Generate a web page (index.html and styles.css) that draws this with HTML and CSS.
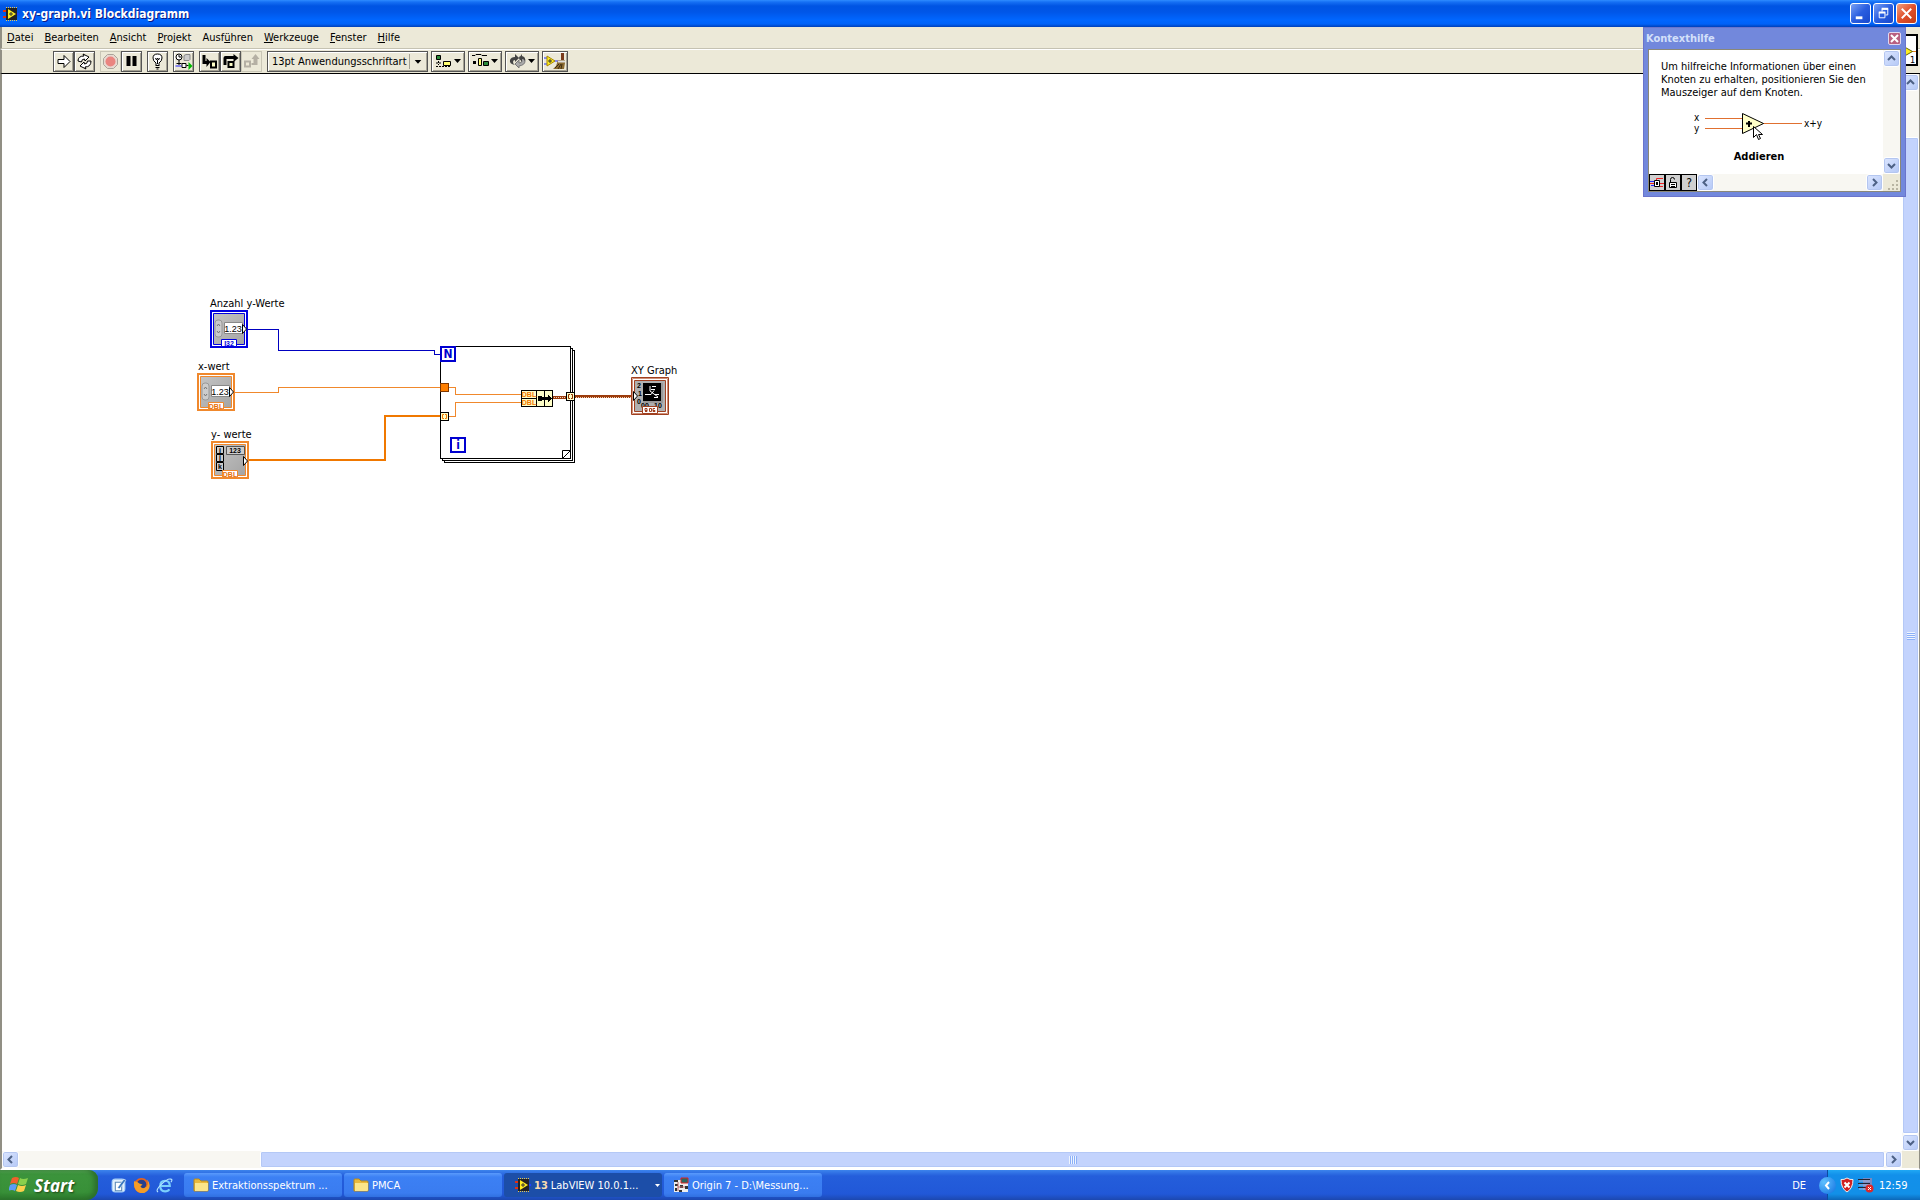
FILE: index.html
```html
<!DOCTYPE html>
<html lang="de">
<head>
    <meta charset="UTF-8">
    <meta name="viewport" content="width=device-width, initial-scale=1.0">
    <title>xy-graph.vi Blockdiagramm</title>
    <link rel="stylesheet" href="styles.css">
</head>
<body>
    <!-- shared symbols -->
    <svg class="defs" width="0" height="0" aria-hidden="true">
        <symbol id="vi" viewBox="0 0 16 16">
            <path d="M0 5h3M0 11h3" stroke="#e03010" stroke-width="2"/>
            <path d="M13 8h3" stroke="#2040ff" stroke-width="2"/>
            <path d="M3 2h11v12H3z" fill="#222"/>
            <path d="M3 1.500h11M3 14.500h11" stroke="#e8c850" stroke-dasharray="1 1"/>
            <path d="M5 3l8 5-8 5z" fill="#ffee20"/>
            <path d="M6 8h4M8 6v4" stroke="#333"/>
        </symbol>
        <symbol id="folder" viewBox="0 0 16 16">
            <path d="M1 3q0-1 1-1h4l2 2h6q1 0 1 1v9H1z" fill="#e9b93c" stroke="#b98a1c"/>
            <path d="M2 6h13v7q0 1-1 1H2z" fill="#fbe58a"/>
        </symbol>
        <symbol id="up" viewBox="0 0 9 9"><path d="M1 6l3.500-3.500L8 6" fill="none" stroke="#4d6185" stroke-width="2"/></symbol>
        <symbol id="down" viewBox="0 0 9 9"><path d="M1 3l3.500 3.500L8 3" fill="none" stroke="#4d6185" stroke-width="2"/></symbol>
        <symbol id="left" viewBox="0 0 9 9"><path d="M6 1L2.500 4.500L6 8" fill="none" stroke="#4d6185" stroke-width="2"/></symbol>
        <symbol id="right" viewBox="0 0 9 9"><path d="M3 1l3.500 3.500L3 8" fill="none" stroke="#4d6185" stroke-width="2"/></symbol>
    </svg>

    <header class="titlebar">
        <svg class="icon16" aria-hidden="true"><use href="#vi"/></svg>
        <h1>xy-graph.vi Blockdiagramm</h1>
        <div class="window-buttons">
            <button type="button" aria-label="Minimieren"><svg viewBox="0 0 20 20"><path d="M5 14.500h7" stroke="#fff" stroke-width="3"/></svg></button>
            <button type="button" aria-label="Wiederherstellen"><svg viewBox="0 0 20 20" fill="none" stroke="#fff"><path d="M8.500 8V5.500h6v6H12"/><path d="M8 5h7M5 9h7" stroke-width="2"/><path d="M5.500 9v5.500h6V9"/></svg></button>
            <button type="button" class="close" aria-label="Schließen"><svg viewBox="0 0 20 20"><path d="M5 5l10 10M15 5L5 15" stroke="#fff" stroke-width="2"/></svg></button>
        </div>
    </header>

    <nav class="menubar">
        <a href="#"><u>D</u>atei</a>
        <a href="#"><u>B</u>earbeiten</a>
        <a href="#"><u>A</u>nsicht</a>
        <a href="#"><u>P</u>rojekt</a>
        <a href="#">Ausf<u>ü</u>hren</a>
        <a href="#"><u>W</u>erkzeuge</a>
        <a href="#"><u>F</u>enster</a>
        <a href="#"><u>H</u>ilfe</a>
    </nav>

    <div class="toolbar">
        <div class="group">
            <button type="button" aria-label="Ausführen"><svg viewBox="0 0 18 17"><path d="M3.500 6.500h6v-4l6 6-6 6v-4h-6z" fill="#fff" stroke="#000"/></svg></button>
            <button type="button" aria-label="Wiederholt ausführen"><svg viewBox="0 0 18 17" fill="#fff" stroke="#000"><path d="M2.500 8q0-5 6-5l-1-2 6 3-4 4-.5-2q-3 0-3 3z"/><path d="M15.500 8q0 6-6 6l1 2-6-3 4-4 .5 2q3 0 3-3z"/></svg></button>
        </div>
        <div class="group">
            <button type="button" class="flat" aria-label="Abbrechen"><svg viewBox="0 0 18 17"><path d="M6 1.500h6l4 4v6l-4 4H6l-4-4v-6z" fill="#e8d8d0" stroke="#aaa49a"/><circle cx="9" cy="8.500" r="5" fill="#ea8580"/></svg></button>
            <button type="button" aria-label="Pause"><svg viewBox="0 0 18 17"><path d="M4 3h4v10H4zM10 3h4v10h-4z"/></svg></button>
        </div>
        <div class="group">
            <button type="button" aria-label="Highlight-Funktion"><svg viewBox="0 0 18 17" fill="none" stroke="#000"><path d="M7.500 12v-2q-3-2-3-5 0-4 4.500-4t4.500 4q0 3-3 5v2" fill="#fff"/><path d="M7 5l1 2 1-2 1 2 1-2M9 7v4M7 12.500h4M7 14.500h4M8 16h2"/></svg></button>
        </div>
        <div class="group">
            <button type="button" aria-label="Werte beibehalten"><svg viewBox="0 0 18 17" fill="none" stroke="#000"><circle cx="4.500" cy="4" r="3" fill="#fff"/><path d="M4.500 7v5M4.500 2v2h2M2 10.500h5"/><path d="M9.500 2.500l2-1h4v5l-1 1h-5z" fill="#ccc" stroke="#888"/><path d="M1 13h6" stroke="#22f" stroke-width="1"/><path d="M7.500 10.500h4v4h-4z" fill="#fff"/><path d="M12 12.500h2"/><path d="M14 9l4 4-4 4z" fill="#0b0" stroke="none"/></svg></button>
        </div>
        <div class="group">
            <button type="button" aria-label="Hineinspringen"><svg viewBox="0 0 18 17"><path d="M2 2v9h4v3l4-5-4-4v3H5V2z"/><path d="M10.500 8.500h5v6h-5z" fill="#ffffc8" stroke="#000" stroke-width="2"/></svg></button>
            <button type="button" aria-label="Überspringen"><svg viewBox="0 0 18 17"><path d="M2 12V5q0-2 2-2h8V1l5 4-5 4V6H5v6z"/><path d="M7 9h5v5H7z" fill="#ffffc8" stroke="#000" stroke-width="2"/></svg></button>
            <button type="button" class="flat" aria-label="Herausspringen"><svg viewBox="0 0 18 17" fill="#b5b0a4"><path d="M2.500 8.500h5v5h-5z" fill="#eee9d6" stroke="#b5b0a4" stroke-width="2"/><path d="M9 12h6V6h2l-4-5-4 5h2v4H9z"/></svg></button>
        </div>
        <div class="font-picker">
            <select aria-label="Schriftart"><option>13pt Anwendungsschriftart</option></select>
            <svg viewBox="0 0 17 15" aria-hidden="true"><path d="M5 6h7l-3.500 4z"/></svg>
        </div>
        <button type="button" class="wide" aria-label="Objekte ausrichten"><svg viewBox="0 0 30 17"><path d="M3.500 2.500h4v4h-4z" fill="#2a8a3a" stroke="#000"/><path d="M10.500 8.500h7v4h-7z" fill="#ffff70" stroke="#000"/><path d="M5.500 8v4M3 10h5M3 13.500h15" stroke="#000" stroke-dasharray="2 1"/><path d="M21 6h7l-3.500 4z"/></svg></button>
        <button type="button" class="wide" aria-label="Objekte verteilen"><svg viewBox="0 0 30 17"><path d="M2 2.500h3l1-1h5l1 1h5" fill="none" stroke="#000"/><path d="M3 8h3v3H3z"/><path d="M8.500 5.500h3v7h-3z" fill="#ffff70" stroke="#000"/><path d="M13.500 8.500h5v4h-5z" fill="#2a8a3a" stroke="#000"/><path d="M21 6h7l-3.500 4z"/></svg></button>
        <button type="button" class="wide" aria-label="Neu ordnen"><svg viewBox="0 0 30 17"><path d="M8 12q-6-1-5-5 1-3 5-3V1l4 4-4 4V7q-2 0-2 2t2 3z" fill="#444"/><path d="M12 4q6 0 6 4t-6 5v2L8 11l4-4v3q3 0 3-2t-3-2z" fill="#aaa" stroke="#777"/><path d="M12 5l3-4v2q4 1 3 5-1-2-3-2v3z" fill="#444"/><path d="M21 6h7l-3.500 4z"/></svg></button>
        <button type="button" class="clean" aria-label="Diagramm aufräumen"><svg viewBox="0 0 22 17"><path d="M0 5h4M0 11h4M10 8h4" stroke="#23f"/><path d="M3 3l8 5-8 5z" fill="#ffee20" stroke="#a80"/><path d="M4 8h4M6 6v4" stroke="#333"/><path d="M17 0h3v7h-3z" fill="#7a3b1c"/><path d="M14 7h7v3l-1 6H9l3-3z" fill="#8a6a30"/><path d="M14 8.500h7" stroke="#ddd" stroke-width="2"/><path d="M11 15l4-4M14 16l3-5M17 16l1-5" stroke="#3c2c10"/></svg></button>
        <svg class="vi-icon" viewBox="0 0 32 32" aria-label="VI-Symbol">
            <path d="M1 1h30v30H1z" fill="#fff" stroke="#000" stroke-width="2"/>
            <path d="M2 17.500h28" stroke="#e08020"/>
            <path d="M18.500 13v9l8-4.500z" fill="#ffee20" stroke="#660"/>
            <text x="24" y="29" font-size="9">1</text>
        </svg>
    </div>

    <main class="workspace">
        <div class="canvas">
            <svg class="diagram" width="700" height="420" viewBox="2 74 700 420" role="img" aria-label="Blockdiagramm">
                <defs>
                    <linearGradient id="steel" x1="0" y1="0" x2="1" y2="1">
                        <stop offset="0" stop-color="#c4c4c4"/><stop offset="1" stop-color="#a4a4a4"/>
                    </linearGradient>
                    <pattern id="weave" width="2" height="3" patternUnits="userSpaceOnUse">
                        <path d="M0 0h2v3H0z" fill="#9c3c0c"/><path d="M0 1h1v1H0z" fill="#f0d0b8"/>
                    </pattern>
                </defs>

                <!-- wires -->
                <g fill="none" shape-rendering="crispEdges">
                    <path d="M248 329.500H278.500V350.500H434.500V354.500H441" stroke="#0000c0"/>
                    <path d="M235 392.500H278.500V387.500H441" stroke="#f0882c"/>
                    <path d="M249 460H385V416H441" stroke="#f07800" stroke-width="2"/>
                </g>

                <!-- for loop -->
                <g fill="#fff" stroke="#000" shape-rendering="crispEdges">
                    <path d="M444.500 350.500h130v112h-130z"/>
                    <path d="M442.500 348.500h130v112h-130z"/>
                    <path d="M440.500 346.500h130v112h-130z"/>
                </g>
                <path d="M562.500 458.500v-8h8z" fill="#fff" stroke="#000"/>
                <g fill="none" stroke="#f0882c" shape-rendering="crispEdges">
                    <path d="M449 387.500h6.500v7H522"/>
                    <path d="M449 416.500h6.500v-14H522"/>
                </g>
                <path d="M441 347h14v14h-14z" fill="#fff" stroke="#0000d0" stroke-width="2"/>
                <text class="loop" x="448" y="358">N</text>
                <path d="M451 438h14v14h-14z" fill="#fff" stroke="#0000d0" stroke-width="2"/>
                <text class="loop" x="458" y="449">i</text>
                <g stroke="#000" shape-rendering="crispEdges">
                    <path d="M440.500 383.500h8v8h-8z" fill="#ff7f00" stroke="#803800"/>
                    <path d="M440.500 412.500h8v8h-8z" fill="#ffffc8"/>
                    <path d="M566.500 392.500h8v8h-8z" fill="#ffffc8"/>
                </g>
                <path d="M444 414.500h-1.500v4h1.500M445 414.500h1.500v4h-1.500" fill="none" stroke="#f07800"/>
                <path d="M570 394.500h-1.500v4h1.500M571 394.500h1.500v4h-1.500" fill="none" stroke="#903000"/>

                <!-- bundle -->
                <g shape-rendering="crispEdges">
                    <path d="M521.500 390.500h31v16h-31z" fill="#ffffc8" stroke="#000"/>
                    <path d="M521 398.500h16M536.500 391v16M544.500 391v16" stroke="#000"/>
                    <path d="M538 396h4v1h6v-2l4 3.500-4 3.500v-2h-6v1h-4z"/>
                </g>
                <text class="type" x="529" y="397" fill="#f07800">DBL</text>
                <text class="type" x="529" y="405" fill="#f07800">DBL</text>
                <path d="M553 396h13v3h-13zM575 395h57v3h-57z" fill="url(#weave)"/>

                <!-- terminals -->
                <g id="i32">
                    <path d="M211 311h36v36h-36z" fill="#fff" stroke="#0000e0" stroke-width="2"/>
                    <path d="M213.500 313.500h31v31h-31z" fill="url(#steel)" stroke="#0000e0"/>
                    <rect x="215" y="320" width="7" height="17" rx="3" fill="#ccc" stroke="#999"/>
                    <path d="M217 326l1.500-2 1.500 2M217 331l1.500 2 1.500-2" fill="none" stroke="#777"/>
                    <path d="M224.500 322.500h18v11h-18z" fill="#fff" stroke="#888"/>
                    <text class="num" x="233" y="332">1.23</text>
                    <path d="M242.500 324.500v9l4-4.500z" fill="#fff" stroke="#000"/>
                    <path d="M221.500 339.500h15v7h-15z" fill="#fff" stroke="#0000e0"/>
                    <text class="type" x="229" y="346" fill="#0000e0">I32</text>
                </g>
                <g id="dbl">
                    <path d="M198 374h36v36h-36z" fill="#fff" stroke="#f0882c" stroke-width="2"/>
                    <path d="M200.500 376.500h31v31h-31z" fill="url(#steel)" stroke="#f0882c"/>
                    <rect x="202" y="383" width="7" height="17" rx="3" fill="#ccc" stroke="#999"/>
                    <path d="M204 389l1.500-2 1.500 2M204 394l1.500 2 1.500-2" fill="none" stroke="#777"/>
                    <path d="M211.500 385.500h18v11h-18z" fill="#fff" stroke="#888"/>
                    <text class="num" x="220" y="395">1.23</text>
                    <path d="M229.500 387.500v9l4-4.500z" fill="#fff" stroke="#000"/>
                    <path d="M208.500 402.500h15v7h-15z" fill="#fff" stroke="#f0882c"/>
                    <text class="type" x="216" y="409" fill="#e87008">DBL</text>
                </g>
                <g id="array">
                    <path d="M212 442h36v36h-36z" fill="#fff" stroke="#f0882c" stroke-width="2"/>
                    <path d="M214.500 444.500h31v31h-31z" fill="url(#steel)" stroke="#f0882c"/>
                    <path d="M216.500 446.500h7v7h-7zM216.500 454.500h7v7h-7zM216.500 462.500h7v8h-7z" fill="#ccc" stroke="#000"/>
                    <text class="type" x="220" y="453">i</text>
                    <text class="type" x="220" y="460">j</text>
                    <text class="type" x="220" y="469">k</text>
                    <path d="M226.500 446.500h18v8h-18z" fill="#ccc" stroke="#555"/>
                    <text class="type" x="235" y="453">123</text>
                    <path d="M243.500 456.500v9l4-4.500z" fill="#fff" stroke="#000"/>
                    <path d="M222.500 470.500h15v7h-15z" fill="#fff" stroke="#f0882c"/>
                    <text class="type" x="230" y="477" fill="#e87008">DBL</text>
                </g>
                <g id="graph">
                    <path d="M631.500 377.500h37v37h-37z" fill="#fff" stroke="#a04020"/>
                    <path d="M632.500 378.500h35v35h-35z" fill="none" stroke="#d09078"/>
                    <path d="M634.500 380.500h31v31h-31z" fill="#b0b0b0" stroke="#a04020"/>
                    <path d="M643 383h18v18h-18z"/>
                    <path d="M645 394.500h6l3-4M650 386v5l4 3 4 3M652 386.500h4M651 389.500h4M655 394.500h4M654 397.500h4" fill="none" stroke="#fff"/>
                    <path d="M661 383h2v20h-20v-2h18z" fill="#999"/>
                    <text class="type" x="639" y="388">2</text>
                    <text class="type" x="640" y="396">1</text>
                    <text class="type" x="639" y="404">0</text>
                    <text class="type" x="645" y="408">00</text>
                    <text class="type" x="658" y="408">10</text>
                    <path d="M633.500 391.500v9l4-4.500z" fill="#fff" stroke="#000"/>
                    <path d="M642.500 406.500h15v7h-15z" fill="#fff" stroke="#a04020"/>
                    <path d="M645 411.500h2v-3h-2v2h2M649.500 408.500h2v3h-2zM655 408.500h-2v3h2v-1h-2" fill="none" stroke="#a04020"/>
                </g>
                <text class="label" x="210" y="307">Anzahl y-Werte</text>
                <text class="label" x="198" y="370">x-wert</text>
                <text class="label" x="211" y="438">y- werte</text>
                <text class="label" x="631" y="374">XY Graph</text>
            </svg>
        </div>
        <div class="scroll vertical page-v">
            <button type="button" aria-label="Nach oben"><svg><use href="#up"/></svg></button>
            <div class="thumb"><i></i></div>
            <button type="button" aria-label="Nach unten"><svg><use href="#down"/></svg></button>
        </div>
        <div class="scroll horizontal page-h">
            <button type="button" aria-label="Nach links"><svg><use href="#left"/></svg></button>
            <div class="thumb"><i></i></div>
            <button type="button" aria-label="Nach rechts"><svg><use href="#right"/></svg></button>
        </div>
    </main>

    <aside class="help">
        <div class="help-title">
            <h2>Kontexthilfe</h2>
            <button type="button" aria-label="Kontexthilfe schließen"><svg viewBox="0 0 11 11"><path d="M2 2l7 7M9 2L2 9" stroke="#fff" stroke-width="2"/></svg></button>
        </div>
        <div class="help-body">
            <div class="help-text">
                <p>Um hilfreiche Informationen über einen<br>Knoten zu erhalten, positionieren Sie den<br>Mauszeiger auf dem Knoten.</p>
                <svg width="196" height="34" viewBox="0 0 196 34" role="img" aria-label="Addieren">
                    <path d="M44 8.500h38M44 18.500h38M102 13.500h39" stroke="#e07030"/>
                    <path d="M81.500 3.500v20l21-10z" fill="#ffffc8" stroke="#000"/>
                    <path d="M85 13.500h6M88 11v6" stroke="#000" stroke-width="2"/>
                    <path d="M92.500 16.500v11l3-3 2 5 2-1-2-4h4z" fill="#fff" stroke="#000"/>
                    <text x="33" y="11">x</text>
                    <text x="33" y="22">y</text>
                    <text x="143" y="17">x+y</text>
                </svg>
                <strong>Addieren</strong>
            </div>
            <div class="scroll vertical">
                <button type="button" aria-label="Hilfe nach oben"><svg><use href="#up"/></svg></button>
                <button type="button" aria-label="Hilfe nach unten"><svg><use href="#down"/></svg></button>
            </div>
            <div class="help-footer">
                <button type="button" class="tool" aria-label="Optionale Anschlüsse anzeigen"><svg viewBox="0 0 14 14" fill="none"><path d="M0 5.500h4M1 9.500h4" stroke="#22f"/><path d="M0 7.500h14M6.500 5V2.500H13M9 10.500h4" stroke="#e22"/><path d="M4.500 4.500h5v6h-5z" fill="#fff" stroke="#000"/><path d="M6 6h2v3H6z" fill="#000"/></svg></button>
                <button type="button" class="tool" aria-label="Hilfe sperren"><svg viewBox="0 0 14 14" fill="none"><path d="M4.500 7V3.500q0-2 2-2t2 2" stroke="#000"/><path d="M3.500 6.500h7v5h-7z" fill="#fff" stroke="#000"/><path d="M5 8.500h4M5 10.500h4" stroke="#000"/></svg></button>
                <button type="button" class="tool" aria-label="Ausführliche Hilfe">?</button>
                <div class="scroll horizontal">
                    <button type="button" aria-label="Hilfe nach links"><svg><use href="#left"/></svg></button>
                    <button type="button" aria-label="Hilfe nach rechts"><svg><use href="#right"/></svg></button>
                </div>
                <svg class="grip" viewBox="0 0 17 17"><path d="M13 6h2v2h-2zM9 10h2v2H9zM13 10h2v2h-2zM5 14h2v2H5zM9 14h2v2H9zM13 14h2v2h-2z" fill="#b8b4a2"/></svg>
            </div>
        </div>
    </aside>

    <footer class="taskbar">
        <button type="button" class="start">
            <svg viewBox="0 0 20 20" aria-hidden="true">
                <path d="M3 3q4-2 7 0L8 9Q5 7 1 9z" fill="#f0602c"/>
                <path d="M11 3q3 2 8 0l-2 6q-4 2-8 0z" fill="#8ad04c"/>
                <path d="M1 10q4-2 7 0l-2 6q-3-2-7 0z" fill="#5c9cf4"/>
                <path d="M9 10q4 2 8 0l-2 6q-4 2-8 0z" fill="#fcd04c"/>
            </svg>
            Start
        </button>
        <div class="quick">
            <a href="#" aria-label="Desktop anzeigen"><svg viewBox="0 0 16 16"><rect x="2" y="2" width="12" height="12" rx="3" fill="#e4f0fc" stroke="#a8d0f8"/><path d="M5 5h6v8H5z" fill="#fff" stroke="#5a88b8"/><path d="M7 10l6-8 2 1-6 8z" fill="#3a78c0" stroke="#fff" stroke-width=".5"/></svg></a>
            <a href="#" aria-label="Firefox"><svg viewBox="0 0 16 16"><circle cx="8" cy="8" r="7" fill="#e8641c"/><circle cx="8" cy="7" r="4.500" fill="#28408c"/><path d="M1 4q3 0 5 2l3 1-2 2q2 3 6 0 2-3 0-7 4 4 2 9-3 5-8 4Q0 13 1 4z" fill="#f49c28"/></svg></a>
            <a href="#" aria-label="Internet Explorer"><svg viewBox="0 0 16 16" fill="none"><path d="M4 8.500h9q0-5-4.500-5T4 8.500t4.500 5q3 0 4-2" stroke="#7cd0fc" stroke-width="2"/><path d="M2 14q-3-1 3-7t9-5q2 0 0 3" stroke="#b4e6ff" stroke-width="1"/></svg></a>
        </div>
        <div class="tasks">
            <button type="button"><svg class="icon16"><use href="#folder"/></svg><span>Extraktionsspektrum ...</span></button>
            <button type="button"><svg class="icon16"><use href="#folder"/></svg><span>PMCA</span></button>
            <button type="button" class="active"><svg class="icon16"><use href="#vi"/></svg><b>13</b><span>LabVIEW 10.0.1...</span><svg class="more" viewBox="0 0 5 3"><path d="M0 0h5L2.500 3z" fill="#fff"/></svg></button>
            <button type="button"><svg class="icon16" viewBox="0 0 16 16"><path d="M1 3h14v12H1z" fill="#eee"/><path d="M8 1h7v5H8z" fill="#286860" stroke="#d22"/><path d="M1 3h4v2H1zM2 7h3v2H2zM7 8h3v3H7zM2 11h2v3H2zM12 9h3v3h-3zM6 13h3v2H6z" fill="#333"/><path d="M5 5v9M5 10h7" stroke="#b66"/></svg><span>Origin 7 - D:\Messung...</span></button>
        </div>
        <span class="lang">DE</span>
        <div class="tray">
            <button type="button" class="expand" aria-label="Ausgeblendete Symbole"><svg viewBox="0 0 9 9"><path d="M6 1L3 4.500L6 8" fill="none" stroke="#fff" stroke-width="2"/></svg></button>
            <svg viewBox="0 0 16 16"><path d="M8 1q3 2 6 1.500 0 9-6 12.500Q2 11.500 2 2.500 5 3 8 1z" fill="#d02020" stroke="#eee"/><path d="M5.500 5.500l5 5M10.500 5.500l-5 5" stroke="#fff" stroke-width="2"/></svg>
            <svg viewBox="0 0 16 16"><path d="M5 1h9v12H5z" fill="#7888c0"/><path d="M0 2.500h12M0 6.500h12M0 10.500h10" stroke="#223"/><path d="M1 4h11M1 8h11M1 12h9" stroke="#a8b4e0"/><circle cx="11.500" cy="11.500" r="4" fill="#e02828"/><path d="M10 10l3 3M13 10l-3 3" stroke="#fff"/></svg>
            <time>12:59</time>
        </div>
    </footer>
</body>
</html>
```
FILE: styles.css
```css
* {
    box-sizing: border-box;
}

body {
    display: flex;
    flex-direction: column;
    height: 100vh;
    margin: 0;
    overflow: hidden;
    background: #ece9d8;
    color: #000;
    font-family: "DejaVu Sans Condensed", "Noto Sans", sans-serif;
    font-size: 11px;
}

button, select {
    margin: 0;
    padding: 0;
    border: none;
    background: none;
    color: inherit;
    font: inherit;
}

svg {
    display: block;
    flex: none;
}

a {
    color: inherit;
    text-decoration: none;
}

.defs {
    position: absolute;
}

.icon16 {
    width: 16px;
    height: 16px;
}

/* title bar */
.titlebar {
    display: flex;
    align-items: center;
    gap: 3px;
    height: 27px;
    padding: 0 3px;
    background: linear-gradient(#2f8cff 0, #1670f4 2px, #0054e3 6px, #0056e8 12px, #0066ff 20px, #0062f8 24px, #0040b8 27px);
    color: #fff;
}

.titlebar h1 {
    flex: 1;
    margin: 0;
    font-size: 12px;
    text-shadow: 1px 1px #0a1883;
}

.window-buttons {
    display: flex;
    gap: 2px;
}

.window-buttons button {
    width: 21px;
    height: 21px;
    border: 1px solid #fff;
    border-radius: 3px;
    background: linear-gradient(135deg, #7aa0f4, #2a5ee0 50%, #1848cc);
}

.window-buttons .close {
    background: linear-gradient(135deg, #f0a080, #e0502c 50%, #c03c18);
}

/* menu and toolbar */
.menubar {
    display: flex;
    height: 22px;
    border-bottom: 1px solid #c5c2b2;
    border-left: 2px solid #918f84;
    line-height: 21px;
}

.menubar a {
    padding: 0 6px 0 5px;
}

.toolbar {
    display: flex;
    align-items: center;
    gap: 5px;
    height: 25px;
    padding: 0 2px 0 51px;
    border-top: 1px solid #fff;
    border-bottom: 1px solid #000;
    border-left: 2px solid #918f84;
}

.toolbar .group {
    display: flex;
}

.toolbar button, .font-picker {
    width: 21px;
    height: 21px;
    border: 1px solid #555;
    background: #ece9d8;
    box-shadow: inset 1px 1px #fff, inset -1px -1px #a5a294;
}

.toolbar button svg {
    width: 100%;
    height: 17px;
}

.toolbar .flat {
    border-color: #c9c6b6;
    box-shadow: none;
}

.toolbar .wide, .font-picker {
    width: 34px;
    margin-right: -2px;
}

.toolbar .clean {
    width: 26px;
}

.toolbar .font-picker {
    display: grid;
    grid-template-columns: 1fr 18px;
    align-items: center;
    width: 161px;
}

.font-picker select {
    grid-area: 1 / 1 / 2 / 3;
    height: 19px;
    padding: 0 4px;
    appearance: none;
}

.font-picker svg {
    grid-area: 1 / 2;
    width: 17px;
    height: 15px;
    border-left: 1px solid #a5a294;
    pointer-events: none;
}

.vi-icon {
    align-self: flex-end;
    width: 32px;
    height: 32px;
    margin: 0 0 7px auto;
}

/* block diagram */
.workspace {
    flex: 1;
    display: grid;
    grid-template-columns: 1fr 17px;
    grid-template-rows: 1fr 17px;
    min-height: 0;
    border-left: 2px solid #918f84;
    border-right: 1px solid #918f84;
    border-bottom: 2px solid #fff;
}

.canvas {
    overflow: hidden;
    background: #fff;
}

.diagram text {
    text-anchor: middle;
}

.diagram .label {
    font-size: 11px;
    text-anchor: start;
}

.diagram .loop {
    fill: #0000d0;
    font-size: 12px;
    font-weight: bold;
}

.diagram .num {
    font-family: "Liberation Sans", sans-serif;
    font-size: 9px;
}

.diagram .type {
    font-family: "Liberation Sans", sans-serif;
    font-size: 7px;
    font-weight: bold;
}

/* scroll bars */
.scroll {
    display: flex;
    justify-content: space-between;
    background: #f8f7f2;
}

.scroll.vertical {
    flex-direction: column;
}

.scroll button {
    display: grid;
    place-items: center;
    width: 17px;
    height: 17px;
    border: 1px solid #fff;
    border-radius: 3px;
    background: linear-gradient(135deg, #dce6ff, #b4c8f6);
    box-shadow: inset 0 0 0 1px #b4c6f0;
}

.scroll button svg {
    width: 9px;
    height: 9px;
}

.thumb {
    display: grid;
    place-items: center;
    flex: 1;
    border: 1px solid #fff;
    border-radius: 2px;
    background: #c3d3fd;
    box-shadow: inset 0 0 0 1px #b4c8f6;
}

.page-v .thumb {
    margin-top: 46px;
}

.page-h .thumb {
    margin-left: 241px;
}

.thumb i {
    width: 8px;
    height: 8px;
}

.page-v i {
    background: repeating-linear-gradient(#eef4fe 0 1px, #8cb0f8 1px 2px);
}

.page-h i {
    background: repeating-linear-gradient(90deg, #eef4fe 0 1px, #8cb0f8 1px 2px);
}

/* floating context help */
.help {
    position: absolute;
    top: 27px;
    right: 14px;
    width: 263px;
    padding: 0 4px 4px;
    border: 1px solid #6a74cc;
    background: #7288dc;
}

.help-title {
    display: flex;
    align-items: center;
    justify-content: space-between;
    height: 21px;
    color: #d4e0fa;
}

.help-title h2 {
    margin: 0 0 0 -2px;
    font-size: 11px;
}

.help-title button {
    width: 13px;
    height: 13px;
    border: 1px solid #e0d8f0;
    border-radius: 2px;
    background: #b86080;
}

.help-body {
    display: grid;
    grid-template-columns: 1fr 17px;
    border: 1px solid #8a8878;
    background: #fff;
}

.help-text {
    display: flex;
    flex-direction: column;
    height: 124px;
    padding: 10px 12px;
}

.help-text p {
    margin: 0;
    line-height: 13px;
    white-space: nowrap;
}

.help-text svg {
    margin-top: 11px;
    font-size: 10px;
}

.help-text strong {
    padding: 6px 14px 0 0;
    text-align: center;
}

.help-footer {
    grid-column: 1 / 3;
    display: flex;
    background: #f8f7f2;
}

.help-footer .scroll {
    flex: 1;
}

.help-footer .tool {
    width: 16px;
    height: 17px;
    border: 1px solid #000;
    background: #d0d0d0;
    font-size: 12px;
    line-height: 14px;
}

.grip {
    width: 17px;
    height: 17px;
    background: #ece9d8;
}

/* taskbar */
.taskbar {
    display: flex;
    height: 30px;
    background: linear-gradient(#3c84ec 0, #3070e4 3px, #245edb 6px, #2158d8 24px, #1c48b0 30px);
    color: #fff;
}

.start {
    display: flex;
    align-items: center;
    gap: 5px;
    width: 98px;
    padding-left: 9px;
    border-radius: 0 9px 12px 0;
    background: linear-gradient(#58a858 0, #3c943c 4px, #389038 22px, #2a762a 30px);
    box-shadow: inset -4px 0 5px #2c6e2c;
    font-family: "Open Sans", sans-serif;
    font-size: 17px;
    font-style: italic;
    font-weight: bold;
    text-shadow: 1px 1px 2px #1c4414;
}

.start svg {
    width: 20px;
    height: 20px;
}

.quick {
    display: flex;
    align-items: center;
    gap: 6px;
    padding: 0 11px 0 12px;
}

.quick svg {
    width: 17px;
    height: 17px;
}

.tasks {
    display: flex;
    align-items: center;
    gap: 2px;
}

.tasks button {
    display: flex;
    align-items: center;
    gap: 3px;
    width: 158px;
    height: 24px;
    padding: 0 2px 0 9px;
    border-radius: 3px;
    background: linear-gradient(#5a9afc, #3c80f4 4px, #3a7cf0 20px, #3070e0);
}

.tasks .active {
    padding-left: 11px;
    background: #1c4ea8;
}

.tasks b {
    color: #f8dcb0;
}

.tasks .more {
    width: 5px;
    height: 3px;
    margin-left: auto;
}

.lang {
    margin-left: auto;
    padding-right: 21px;
    line-height: 31px;
}

.tray {
    display: flex;
    align-items: center;
    gap: 3px;
    width: 93px;
    border-left: 1px solid #0c4ca0;
    background: linear-gradient(#20a8f4 0, #1290ea 5px, #1290e8 24px, #0c68b8 30px);
}

.tray svg {
    width: 16px;
    height: 16px;
}

.expand {
    display: grid;
    place-items: center;
    width: 17px;
    height: 17px;
    margin-left: -9px;
    border-radius: 50%;
    background: radial-gradient(circle at 5px 5px, #60c0ff, #1070e0);
}

.tray .expand svg {
    width: 9px;
    height: 9px;
}

.tray time {
    margin-left: 2px;
}
```
